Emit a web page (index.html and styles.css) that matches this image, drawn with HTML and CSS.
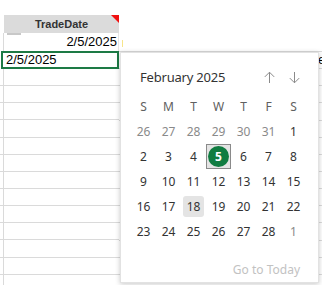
FILE: index.html
```html
<!DOCTYPE html>
<html>
<head>
<meta charset="utf-8">
<link rel="stylesheet" href="styles.css">
</head>
<body>
<div class="sheet">
  <div class="col-a">
    <div class="stub"><div class="stub-lines"></div></div>
    <div class="col-main">
      <div class="top-space"></div>
      <div class="hdr">TradeDate<span class="flag"></span></div>
      <div class="row-val"><span class="tab"></span>2/5/2025</div>
      <div class="row-sel">2/5/2025</div>
      <div class="row"></div><div class="row"></div><div class="row"></div><div class="row"></div>
      <div class="row"></div><div class="row"></div><div class="row"></div><div class="row"></div>
      <div class="row"></div><div class="row"></div><div class="row"></div><div class="row"></div>
      <div class="row"></div>
    </div>
  </div>
  <div class="col-b">
    <div class="b-top"><span class="mark"></span></div>
    <div class="b-row b-first">ex</div>
    <div class="b-row"></div><div class="b-row"></div><div class="b-row"></div><div class="b-row"></div>
    <div class="b-row"></div><div class="b-row"></div><div class="b-row"></div><div class="b-row"></div>
    <div class="b-row"></div><div class="b-row"></div><div class="b-row"></div><div class="b-row"></div>
  </div>

  <div class="popup">
    <div class="cal-head">
      <span class="month">February 2025</span>
      <span class="nav">
        <svg class="arrow" width="13" height="13" viewBox="0 0 13 13"><path d="M6.5 12V1.2M1.8 5.9L6.5 1.2L11.2 5.9" fill="none" stroke="#8a8a8a" stroke-width="1"/></svg>
        <svg class="arrow" width="13" height="13" viewBox="0 0 13 13"><path d="M6.5 1V11.8M1.8 7.1L6.5 11.8L11.2 7.1" fill="none" stroke="#8a8a8a" stroke-width="1"/></svg>
      </span>
    </div>
    <div class="grid">
      <span class="wd">S</span><span class="wd">M</span><span class="wd">T</span><span class="wd">W</span><span class="wd">T</span><span class="wd">F</span><span class="wd">S</span>
      <span class="d other">26</span><span class="d other">27</span><span class="d other">28</span><span class="d other">29</span><span class="d other">30</span><span class="d other">31</span><span class="d">1</span>
      <span class="d">2</span><span class="d">3</span><span class="d">4</span><span class="d sel"><span class="dot">5</span></span><span class="d">6</span><span class="d">7</span><span class="d">8</span>
      <span class="d">9</span><span class="d">10</span><span class="d">11</span><span class="d">12</span><span class="d">13</span><span class="d">14</span><span class="d">15</span>
      <span class="d">16</span><span class="d">17</span><span class="d"><span class="hov">18</span></span><span class="d">19</span><span class="d">20</span><span class="d">21</span><span class="d">22</span>
      <span class="d">23</span><span class="d">24</span><span class="d">25</span><span class="d">26</span><span class="d">27</span><span class="d">28</span><span class="d other">1</span>
    </div>
    <div class="foot">Go to Today</div>
  </div>
</div>
</body>
</html>
```
FILE: styles.css
```css
* { box-sizing: border-box; }
html, body { margin: 0; padding: 0; background: #fff; }
.sheet {
  position: relative;
  width: 322px;
  height: 285px;
  overflow: hidden;
  display: flex;
  font-family: "Liberation Sans", Arial, sans-serif;
  color: #000;
}
.col-a { display: flex; width: 119px; flex: none; }
.stub { width: 3px; }
.stub-lines {
  margin-top: 69px;
  height: 216px;
  background: repeating-linear-gradient(to bottom, transparent 0, transparent 16.15px, #dadada 16.15px, #dadada 17.15px);
}
.col-main { width: 116px; display: flex; flex-direction: column; }
.col-main > div, .col-b > div { flex: none; }
.top-space { height: 15px; }
.hdr {
  position: relative;
  height: 18px;
  margin-left: 1px;
  background: #dbdbdb;
  font-weight: bold;
  font-size: 11px;
  color: #333;
  text-align: center;
  line-height: 19px;
}
.flag {
  position: absolute;
  right: 0; top: 0;
  width: 0; height: 0;
  border-top: 8px solid #f01010;
  border-left: 8px solid transparent;
}
.row-val {
  position: relative;
  height: 18px;
  border-left: 1px solid #dadada;
  border-right: 1px solid #e4e4e4;
  text-align: right;
  font-size: 13px;
  line-height: 18px;
  padding-right: 1px;
}
.tab {
  position: absolute;
  left: 3px; top: 0;
  width: 14px; height: 2px;
  background: #c8c8c8;
}
.row-sel {
  height: 18px;
  margin-left: -2px;
  border: 2px solid #1d7a45;
  font-size: 13px;
  line-height: 14px;
  padding-left: 3px;
}
.row {
  height: 17.15px;
  border-left: 1px solid #dadada;
  border-bottom: 1px solid #dadada;
}
.col-b { flex: 1; display: flex; flex-direction: column; }
.b-top { height: 52px; position: relative; border-bottom: 1px solid #dadada; }
.mark {
  position: absolute;
  left: 3px; top: 40px;
  width: 1px; height: 7px;
  background: #f7e58a;
}
.b-row {
  height: 17.15px;
  border-bottom: 1px solid #dadada;
  font-size: 13px;
  line-height: 16px;
  padding-left: 199px;
  white-space: nowrap;
  overflow: hidden;
}
.popup {
  position: absolute;
  left: 120px;
  top: 52px;
  width: 199px;
  height: 231px;
  background: #fff;
  border: 1px solid #e2e2e2;
  box-shadow: 0 1px 5px rgba(0,0,0,0.22);
  font-family: "Noto Sans", "Open Sans", sans-serif;
  padding-top: 12px;
}
.cal-head {
  height: 24px;
  display: flex;
  align-items: center;
  justify-content: space-between;
  padding-left: 19px;
  padding-right: 17px;
}
.month { font-size: 13px; color: #333; letter-spacing: -0.2px; }
.nav { display: flex; gap: 12px; align-items: center; }
.arrow { display: block; }
.grid {
  margin-top: 5px;
  margin-left: 10px;
  width: 175px;
  display: grid;
  grid-template-columns: repeat(7, 25px);
  grid-auto-rows: 25px;
}
.wd, .d {
  display: flex;
  align-items: center;
  justify-content: center;
  font-size: 12px;
}
.wd { color: #606060; }
.d { color: #333; }
.d.other { color: #8a8a8a; }
.d.sel {
  background: #e4e4e4;
  border: 1px solid #8a8a8a;
}
.dot {
  width: 21px; height: 21px;
  border-radius: 50%;
  background: #107c41;
  color: #fff;
  font-weight: bold;
  display: flex;
  align-items: center;
  justify-content: center;
}
.hov {
  width: 21px; height: 21px;
  border-radius: 3px;
  background: #e4e4e4;
  display: flex;
  align-items: center;
  justify-content: center;
}
.foot {
  margin-top: 18px;
  text-align: right;
  padding-right: 18px;
  font-size: 12px;
  color: #c2c2c2;
  line-height: 16px;
}
```
